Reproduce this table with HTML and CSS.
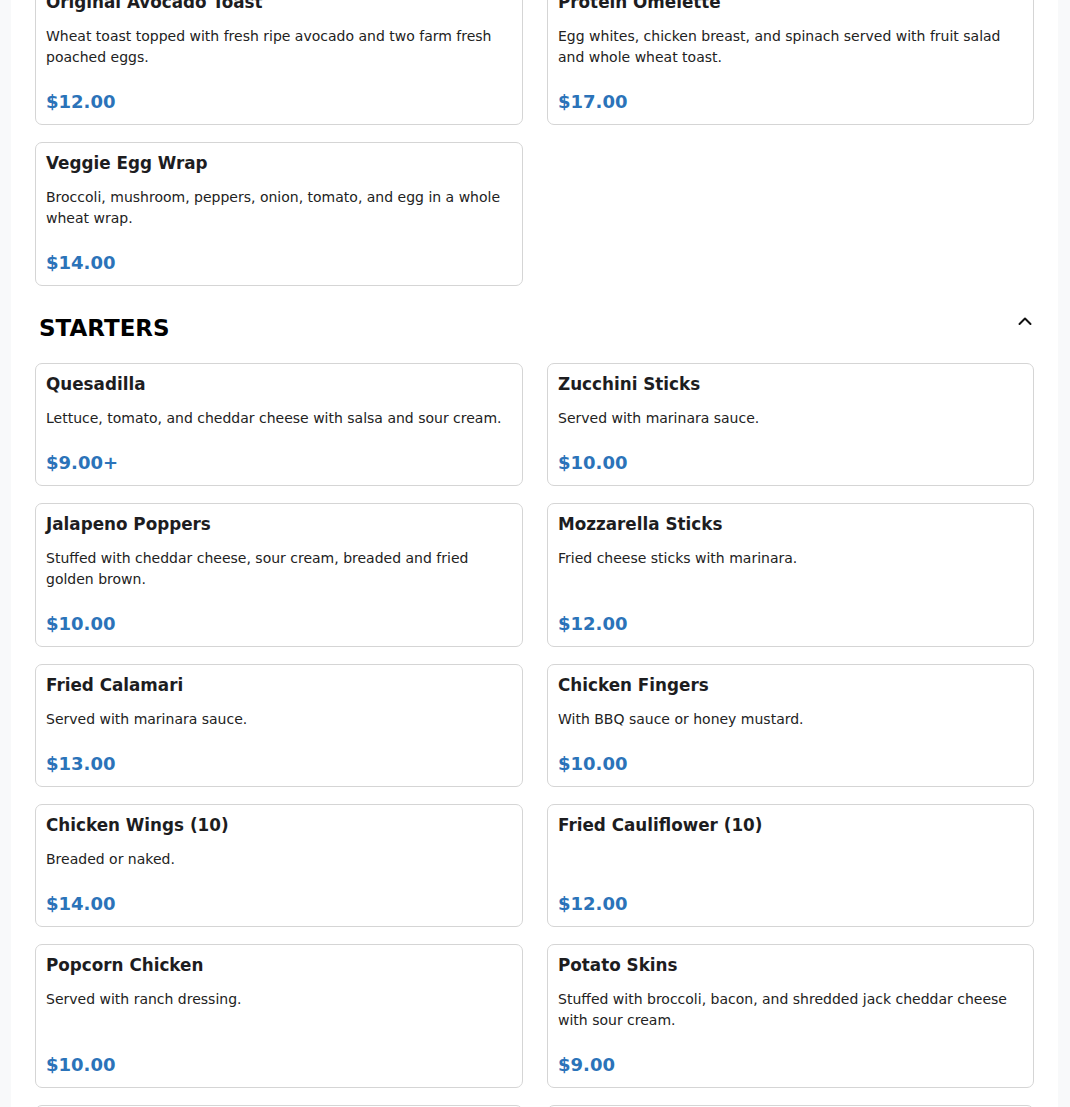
FILE: index.html
```html
<!DOCTYPE html>
<html lang="en">
<head>
<meta charset="utf-8">
<title>Menu</title>
<link rel="stylesheet" href="styles.css">
</head>
<body>
<main class="page">
  <section class="section section-first">
    <div class="grid">
      <article class="card">
        <h3 class="card-title">Original Avocado Toast</h3>
        <p class="card-desc">Wheat toast topped with fresh ripe avocado and two farm fresh poached eggs.</p>
        <div class="card-price">$12.00</div>
      </article>
      <article class="card">
        <h3 class="card-title">Protein Omelette</h3>
        <p class="card-desc">Egg whites, chicken breast, and spinach served with fruit salad and whole wheat toast.</p>
        <div class="card-price">$17.00</div>
      </article>
      <article class="card">
        <h3 class="card-title">Veggie Egg Wrap</h3>
        <p class="card-desc">Broccoli, mushroom, peppers, onion, tomato, and egg in a whole wheat wrap.</p>
        <div class="card-price">$14.00</div>
      </article>
    </div>
  </section>

  <section class="section">
    <header class="section-head">
      <h2 class="section-title">STARTERS</h2>
      <button class="toggle" type="button" aria-label="Collapse">
        <svg width="16" height="16" viewBox="0 0 16 16" fill="none" stroke="#111" stroke-width="2" stroke-linecap="round" stroke-linejoin="round"><polyline points="2.5,11 8,5.5 13.5,11"/></svg>
      </button>
    </header>
    <div class="grid">
      <article class="card">
        <h3 class="card-title">Quesadilla</h3>
        <p class="card-desc">Lettuce, tomato, and cheddar cheese with salsa and sour cream.</p>
        <div class="card-price">$9.00+</div>
      </article>
      <article class="card">
        <h3 class="card-title">Zucchini Sticks</h3>
        <p class="card-desc">Served with marinara sauce.</p>
        <div class="card-price">$10.00</div>
      </article>
      <article class="card">
        <h3 class="card-title">Jalapeno Poppers</h3>
        <p class="card-desc">Stuffed with cheddar cheese, sour cream, breaded and fried golden brown.</p>
        <div class="card-price">$10.00</div>
      </article>
      <article class="card">
        <h3 class="card-title">Mozzarella Sticks</h3>
        <p class="card-desc">Fried cheese sticks with marinara.</p>
        <div class="card-price">$12.00</div>
      </article>
      <article class="card">
        <h3 class="card-title">Fried Calamari</h3>
        <p class="card-desc">Served with marinara sauce.</p>
        <div class="card-price">$13.00</div>
      </article>
      <article class="card">
        <h3 class="card-title">Chicken Fingers</h3>
        <p class="card-desc">With BBQ sauce or honey mustard.</p>
        <div class="card-price">$10.00</div>
      </article>
      <article class="card">
        <h3 class="card-title">Chicken Wings (10)</h3>
        <p class="card-desc">Breaded or naked.</p>
        <div class="card-price">$14.00</div>
      </article>
      <article class="card">
        <h3 class="card-title">Fried Cauliflower (10)</h3>
        <p class="card-desc"></p>
        <div class="card-price">$12.00</div>
      </article>
      <article class="card">
        <h3 class="card-title">Popcorn Chicken</h3>
        <p class="card-desc">Served with ranch dressing.</p>
        <div class="card-price">$10.00</div>
      </article>
      <article class="card">
        <h3 class="card-title">Potato Skins</h3>
        <p class="card-desc">Stuffed with broccoli, bacon, and shredded jack cheddar cheese with sour cream.</p>
        <div class="card-price">$9.00</div>
      </article>
      <article class="card">
        <h3 class="card-title">Nachos</h3>
        <p class="card-desc">Tortilla chips with cheese, jalapenos, salsa and sour cream.</p>
        <div class="card-price">$12.00</div>
      </article>
      <article class="card">
        <h3 class="card-title">Onion Rings</h3>
        <p class="card-desc">Beer battered and fried.</p>
        <div class="card-price">$9.00</div>
      </article>
    </div>
  </section>
</main>
</body>
</html>
```

FILE: styles.css
```css
html {
  scrollbar-width: none;
}
::-webkit-scrollbar {
  display: none;
}
body {
  margin: 0;
  background: #f8f9fa;
  font-family: "DejaVu Sans", Verdana, sans-serif;
  color: #212529;
}
.page {
  margin: 0 12px 0 11px;
  background: #ffffff;
  padding: 0 24px 40px;
}
.section-first {
  margin-top: -19px;
}
.grid {
  display: grid;
  grid-template-columns: 488px 1fr;
  column-gap: 24px;
  row-gap: 17px;
}
.card {
  display: flex;
  flex-direction: column;
  border: 1px solid #d5d5d5;
  border-radius: 7px;
  padding: 10px;
  background: #fff;
}
.card-title {
  margin: 0 0 14px;
  font-size: 16.8px;
  line-height: 20px;
  font-weight: 700;
  color: #1d1d1f;
}
.card-desc {
  margin: 0;
  font-size: 14px;
  line-height: 21px;
  color: #222;
}
.card-price {
  margin-top: auto;
  padding-top: 22px;
  font-size: 18px;
  line-height: 24px;
  font-weight: 700;
  color: #2b73b9;
}
.section-head {
  display: flex;
  justify-content: space-between;
  align-items: flex-start;
  margin: 27px 0 20px;
  padding-left: 4px;
}
.section-title {
  margin: 0;
  font-size: 23px;
  line-height: 30px;
  font-weight: 700;
  color: #000;
}
.toggle {
  display: flex;
  padding: 0;
  margin: 0 1px 0 0;
  border: 0;
  background: transparent;
  width: 16px;
  height: 16px;
  cursor: pointer;
}
```
